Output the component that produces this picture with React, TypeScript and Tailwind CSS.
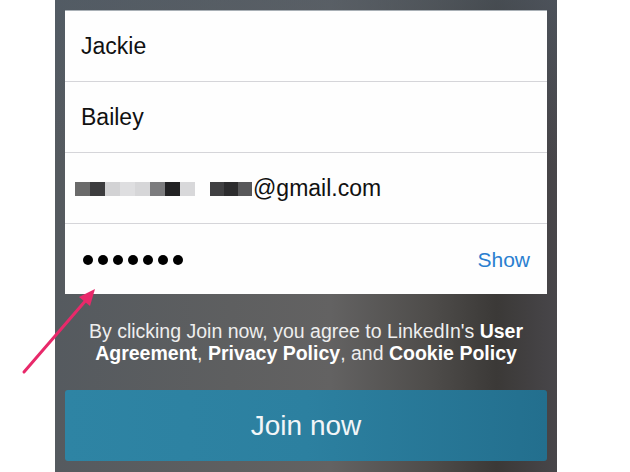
import React from "react";

const blocks1 = ["#6a6a6a", "#3c3c3e", "#d2d2d4", "#dedee0", "#d6d6d8", "#7c7c7e", "#222224", "#d8d8da"];
const blocks2 = ["#404042", "#2c2c2e", "#58585a"];

export default function App() {
  return (
    <div
      className="relative w-[630px] h-[472px] overflow-hidden bg-white flex"
      style={{ fontFamily: '"Liberation Sans", Arial, sans-serif' }}
    >
      <div className="w-[55px] shrink-0" />
      <div className="w-[502px] shrink-0 h-full px-[10px] pt-[10px] flex flex-col bg-[linear-gradient(180deg,rgba(80,92,104,0.55)_0%,rgba(80,92,104,0)_35%),linear-gradient(90deg,#555a5f_0%,#5e5f60_35%,#636262_55%,#4e4c4a_75%,#3b3937_88%,#48464a_100%)]">
        <div className="bg-[#fefefe] flex flex-col border-t border-[#a9b0b6]">
          <div className="h-[70px] flex items-center pl-4 text-[23px] text-[#111]">Jackie</div>
          <div className="h-[71px] flex items-center pl-4 text-[23px] text-[#111] border-t border-[#d5d5d9]">Bailey</div>
          <div className="h-[71px] flex items-center pl-[10px] text-[23px] text-[#111] border-t border-[#d5d5d9]">
            <div className="flex h-[14px] mt-[2px]">
              {blocks1.map((c, i) => (
                <div key={i} className="w-[15px] h-full" style={{ backgroundColor: c }} />
              ))}
            </div>
            <div className="w-[15px]" />
            <div className="flex h-[14px] mt-[2px]">
              {blocks2.map((c, i) => (
                <div key={i} className="w-[14px] h-full" style={{ backgroundColor: c }} />
              ))}
            </div>
            <span className="ml-px">@gmail.com</span>
          </div>
          <div className="h-[71px] flex items-center justify-between pl-[18px] pr-[17px] border-t border-[#d5d5d9]">
            <div className="flex gap-[5px] mt-[1px]">
              {[0, 1, 2, 3, 4, 5, 6].map((i) => (
                <div key={i} className="w-[10px] h-[10px] rounded-full bg-black" />
              ))}
            </div>
            <span className="text-[21px] text-[#2a7fd0] mt-[2px]">Show</span>
          </div>
        </div>
        <div className="mt-[26px] text-center text-[19.5px] leading-[22px] text-[#eeeeee] whitespace-nowrap">
          By clicking Join now, you agree to LinkedIn's <b className="text-white">User</b>
          <br />
          <b className="text-white">Agreement</b>, <b className="text-white">Privacy Policy</b>, and{" "}
          <b className="text-white">Cookie Policy</b>
        </div>
        <div className="mt-[26px] h-[71px] rounded-[3px] flex items-center justify-center bg-[linear-gradient(90deg,#2e84a4_0%,#2c80a0_50%,#236f8e_100%)] text-[28px] text-[#f2f6f8]">
          Join now
        </div>
      </div>
      <div className="flex-1" />
      <svg className="absolute left-0 top-0 pointer-events-none" width="630" height="472">
        <line x1="24" y1="372" x2="87" y2="299" stroke="#e8296a" strokeWidth="3" strokeLinecap="round" />
        <polygon points="95,289 90,306 79,297" fill="#e8296a" />
      </svg>
    </div>
  );
}
